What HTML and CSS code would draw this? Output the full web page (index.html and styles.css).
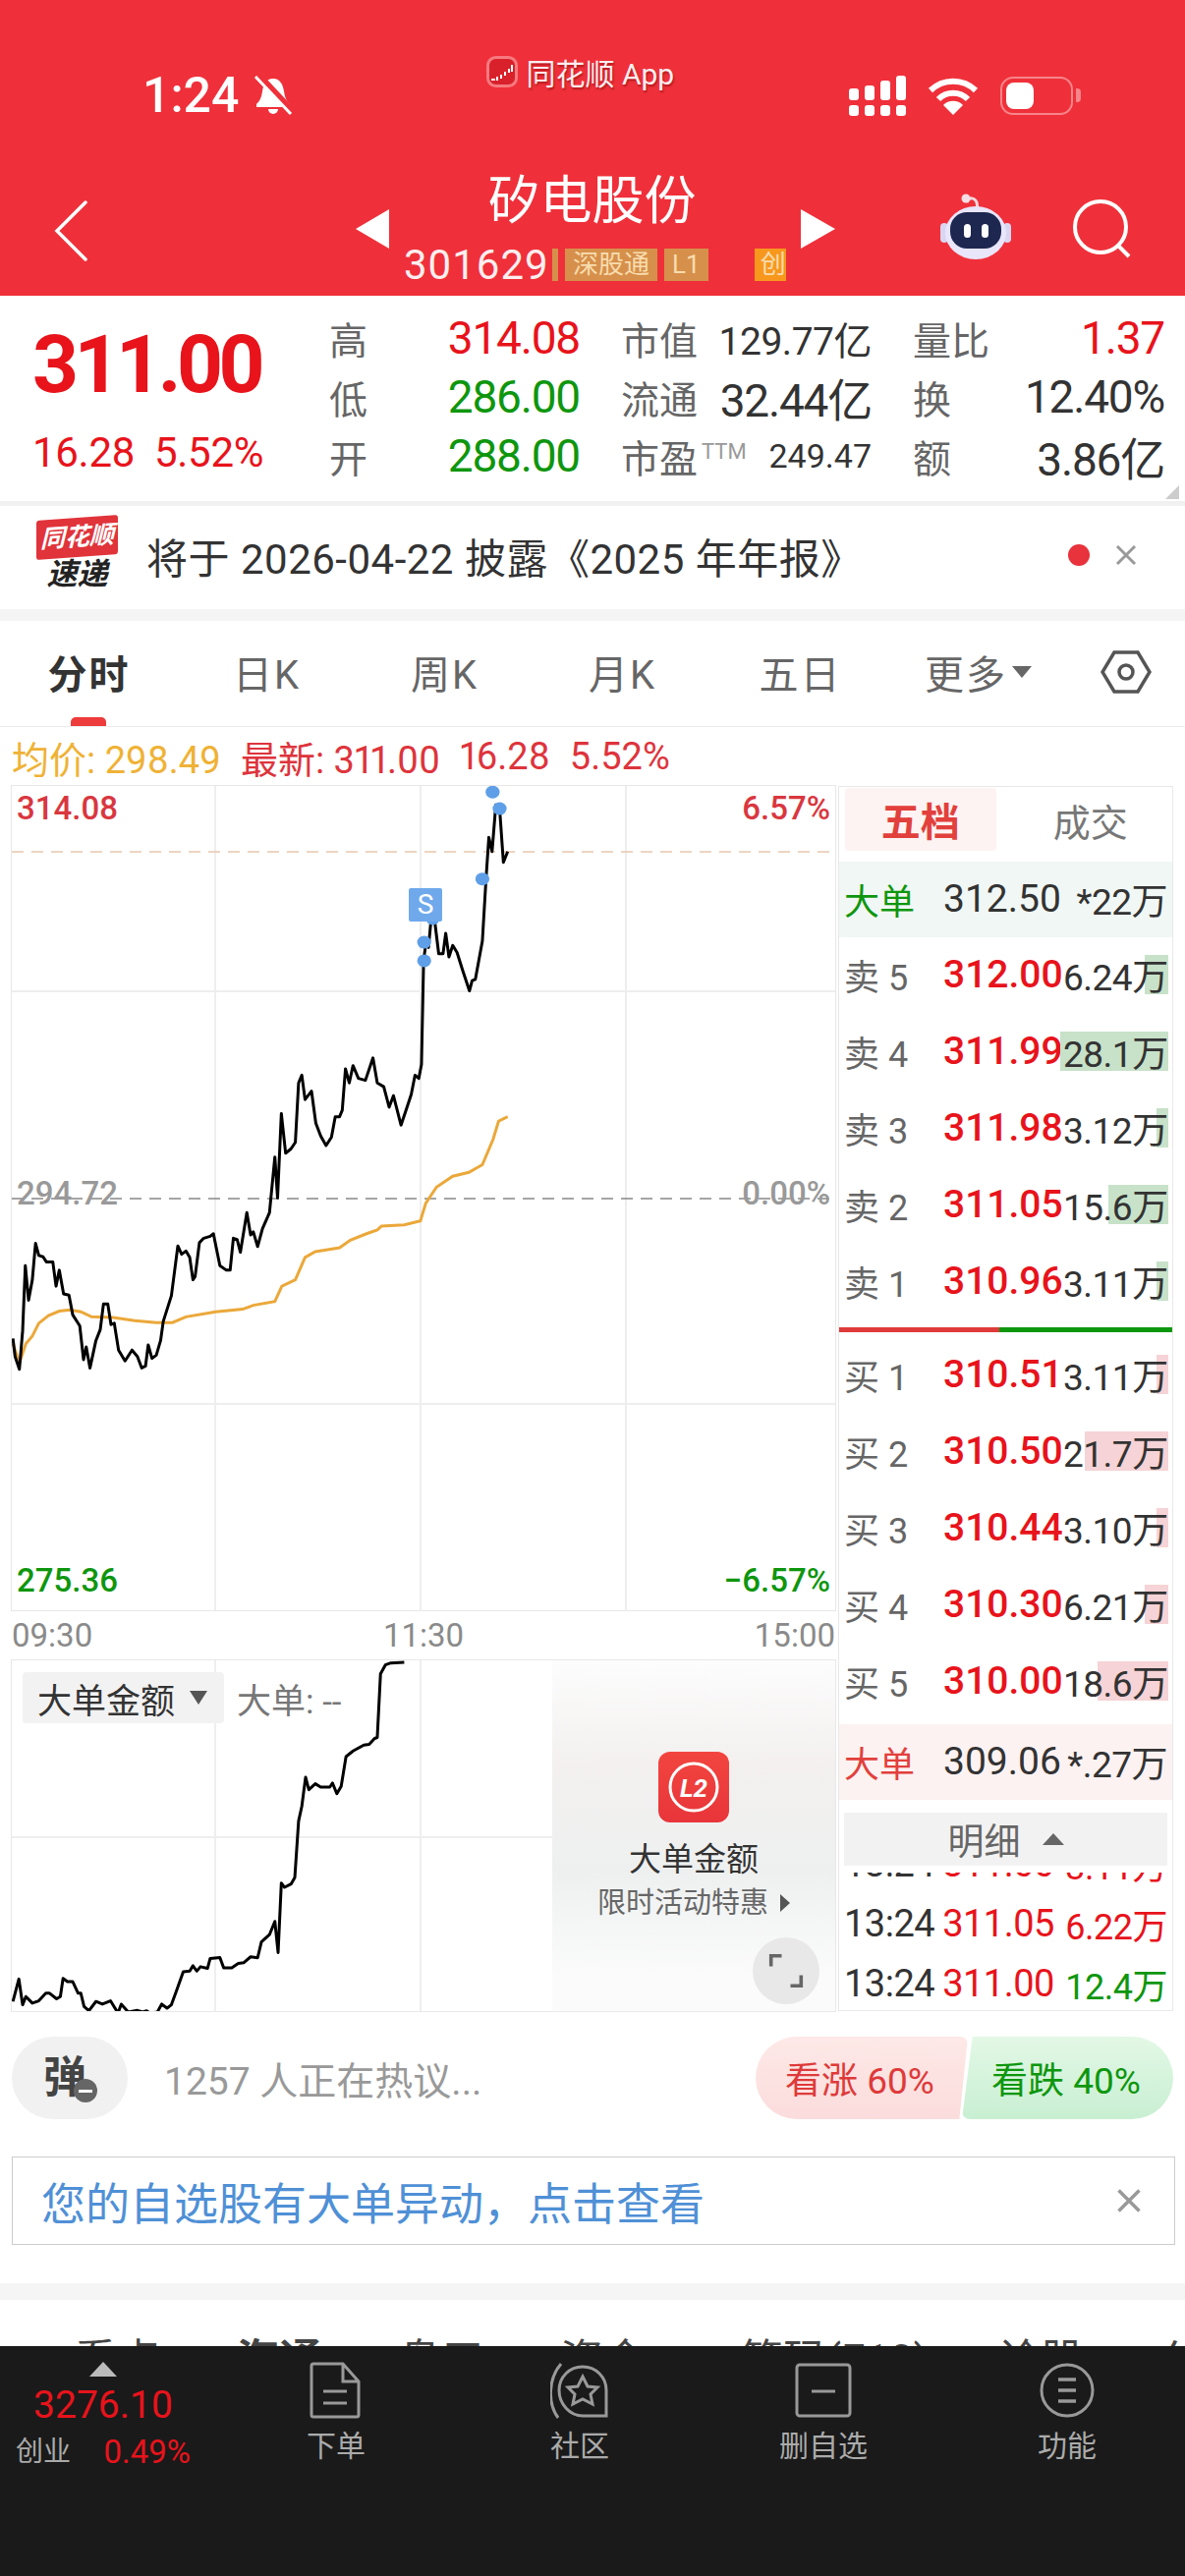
FILE: index.html
```html
<!DOCTYPE html>
<html lang="zh-CN">
<head>
    <meta charset="UTF-8">
    <meta name="viewport" content="width=device-width, initial-scale=1.0">
    <title>矽电股份 301629</title>
    <link rel="stylesheet" href="styles.css">
</head>
<body>

    <header class="topbar">
        <div class="status">
            <div class="clock">
                <span>1:24</span>
                <svg class="bell" viewBox="0 0 40 40">
                    <path fill="#fff" d="M20 3C13 3 10 9 9 16c-1 6-2 9-6 13v3h34v-3c-4-4-5-7-6-13C30 9 27 3 20 3z"/>
                    <path fill="#fff" d="M15 34a5 5 0 0 0 10 0z"/>
                    <path stroke="#ef303a" stroke-width="6" d="M7 1l32 34"/>
                    <path stroke="#fff" stroke-width="3" d="M2 1l36 38"/>
                </svg>
            </div>
            <div class="source">
                <svg class="source-logo" viewBox="0 0 32 32">
                    <rect x="1.5" y="1.5" width="29" height="29" rx="8" fill="#d9212b" stroke="#f67a7f" stroke-width="3"/>
                    <path stroke="#fff" stroke-width="2" d="M5 24h4M11 21v4M15 19v4M19 16v4M23 13v4M26 9v7"/>
                </svg>
                <span>同花顺 App</span>
            </div>
            <div class="sys-icons">
                <svg class="signal" viewBox="0 0 58 41" fill="#fff">
                    <rect x="0" y="13" width="10" height="12" rx="3"/>
                    <rect x="16" y="10" width="10" height="15" rx="3"/>
                    <rect x="32" y="5" width="10" height="20" rx="3"/>
                    <rect x="48" y="0" width="10" height="25" rx="3"/>
                    <rect x="0" y="30" width="10" height="11" rx="3"/>
                    <rect x="16" y="30" width="10" height="11" rx="3"/>
                    <rect x="32" y="30" width="10" height="11" rx="3"/>
                    <rect x="48" y="30" width="10" height="11" rx="3"/>
                </svg>
                <svg class="wifi" viewBox="0 0 52 40" fill="none" stroke="#fff" stroke-width="6">
                    <path d="M3 14a33 33 0 0 1 46 0"/>
                    <path d="M11 23a21 21 0 0 1 30 0"/>
                    <path fill="#fff" stroke="none" d="M26 39L16 29a14 14 0 0 1 20 0z"/>
                </svg>
                <div class="battery"><i></i></div>
            </div>
        </div>
        <div class="nav">
            <svg class="back" viewBox="0 0 34 62" fill="none" stroke="#fff" stroke-width="3.5" stroke-linecap="round">
                <path d="M32 2L3 31l29 29"/>
            </svg>
            <div class="tri tri-left"></div>
            <div class="stock">
                <div class="stock-name">矽电股份</div>
                <div class="stock-sub">
                    <span class="stock-code">301629</span>
                    <span class="tag tag-bar"></span>
                    <span class="tag">深股通</span>
                    <span class="tag">L1</span>
                    <span class="tag tag-cut">创</span>
                </div>
            </div>
            <div class="tri tri-right"></div>
            <svg class="robot" viewBox="0 0 72 68">
                <path d="M27 9c2-6 8-5 10 0l1 6" fill="none" stroke="#f3d8de" stroke-width="3"/>
                <circle cx="26" cy="5" r="4.5" fill="#f6dfe4"/>
                <rect x="0" y="30" width="8" height="20" rx="4" fill="#d9d6f2"/>
                <rect x="64" y="30" width="8" height="20" rx="4" fill="#d9d6f2"/>
                <ellipse cx="36" cy="40" rx="31" ry="27" fill="#e9e5fa"/>
                <rect x="10" y="19" width="52" height="37" rx="17" fill="#1d2750"/>
                <rect x="24" y="31" width="7" height="14" rx="3.5" fill="#fff"/>
                <rect x="42" y="31" width="7" height="14" rx="3.5" fill="#fff"/>
            </svg>
            <svg class="search" viewBox="0 0 60 60" fill="none" stroke="#fff" stroke-width="4">
                <circle cx="29" cy="28" r="26"/>
                <path d="M47 47l11 11"/>
            </svg>
        </div>
    </header>

    <section class="quote">
        <div class="quote-now">
            <div class="price-big">311.00</div>
            <div class="price-change"><span>16.28</span><span>5.52%</span></div>
        </div>
        <div class="quote-grid">
            <div class="cell"><label>高</label><span class="red">314.08</span></div>
            <div class="cell"><label>市值</label><span class="mid">129.77亿</span></div>
            <div class="cell"><label>量比</label><span class="red">1.37</span></div>
            <div class="cell"><label>低</label><span class="green">286.00</span></div>
            <div class="cell"><label>流通</label><span>32.44亿</span></div>
            <div class="cell"><label>换</label><span>12.40%</span></div>
            <div class="cell"><label>开</label><span class="green">288.00</span></div>
            <div class="cell"><label>市盈<sup>TTM</sup></label><span class="small">249.47</span></div>
            <div class="cell"><label>额</label><span>3.86亿</span></div>
        </div>
    </section>

    <div class="notice">
        <div class="notice-logo">
            <div class="notice-logo-top">同花顺</div>
            <div class="notice-logo-bottom">速递</div>
        </div>
        <div class="notice-text">将于 2026-04-22 披露《2025 年年报》</div>
        <div class="notice-dot"></div>
        <svg class="close notice-close" viewBox="0 0 24 24"><path d="M3 3l18 18M21 3L3 21"/></svg>
    </div>

    <nav class="tabs">
        <div class="tab active">分时</div>
        <div class="tab">日K</div>
        <div class="tab">周K</div>
        <div class="tab">月K</div>
        <div class="tab">五日</div>
        <div class="tab">更多<i class="caret"></i></div>
        <div class="tab">
            <svg class="hex" viewBox="0 0 52 46" fill="none" stroke="#555" stroke-width="3.5">
                <path d="M14 3h24l12 20-12 20H14L2 23z"/>
                <circle cx="26" cy="23" r="7"/>
            </svg>
        </div>
    </nav>

    <div class="avg-line">
        <span class="avg-yellow">均价: 298.49</span>
        <span>最新: 311.00</span>
        <span>16.28</span>
        <span>5.52%</span>
    </div>

    <div class="board">
        <div class="charts">
            <div class="chart chart-main">
                <svg class="chart-svg" viewBox="0 0 838 839" width="838" height="839" fill="none">
                    <path class="grid" d="M207 0v839M416 0v839M625 0v839M0 209h838M0 629h838"/>
                    <path stroke="#e7c6ae" stroke-width="1.5" stroke-dasharray="12 8" d="M0 67h838"/>
                    <path stroke="#888" stroke-width="1.5" stroke-dasharray="12 8" d="M0 420h838"/>
                    <svg viewBox="21.9 247.5 1527.7 1289.5" x="0" y="0" width="838" height="839" preserveAspectRatio="none">
                        <polyline class="line-avg" points="24,1120 36,1150 48,1120 60,1108 72,1088 90,1076 110,1069 130,1067 150,1070 170,1078 210,1079 250,1084 290,1087 320,1087 345,1078 400,1070 450,1066 470,1060 510,1054 523,1030 548,1020 566,985 585,976 630,970 650,958 680,948 700,942 708,936 750,934 780,928 790,900 810,875 840,858 870,852 895,840 915,800 925,772 942,765"/>
                        <polyline class="line-price" points="24,1112 28,1140 36,1160 42,1100 47,998 53,1052 60,1020 66,963 72,982 80,984 86,992 98,992 104,1030 110,1005 118,1042 128,1044 135,1075 148,1092 155,1145 160,1125 167,1158 178,1115 186,1098 192,1058 200,1058 206,1090 212,1088 220,1130 232,1147 245,1130 255,1140 263,1158 270,1155 275,1122 282,1143 290,1138 298,1115 303,1085 318,1045 330,967 337,980 345,975 352,985 358,1020 362,1015 370,962 378,955 390,952 396,948 408,998 420,1005 427,1005 433,955 440,957 446,977 458,915 465,950 470,945 478,968 487,940 500,915 510,828 515,892 522,760 530,822 540,815 548,805 554,712 560,700 566,738 578,725 586,775 595,795 605,810 615,797 622,765 630,765 635,755 641,690 648,712 655,685 665,705 678,708 692,673 700,712 712,718 722,750 730,732 744,778 752,758 763,730 770,700 777,705 782,683 786,520 790,495 795,500 800,455 806,455 814,510 822,510 827,478 833,515 840,497 848,508 858,535 871,568 876,552 882,550 895,490 902,390 907,328 913,350 920,277 927,283 934,367 942,350"/>
                        <g fill="#5f9fe8">
                            <ellipse cx="914" cy="257" rx="13" ry="10"/>
                            <ellipse cx="927" cy="283" rx="13" ry="10"/>
                            <ellipse cx="895" cy="393" rx="13" ry="10"/>
                            <ellipse cx="787" cy="492" rx="13" ry="10"/>
                            <ellipse cx="787" cy="521" rx="13" ry="10"/>
                            <ellipse cx="803" cy="455" rx="13" ry="10"/>
                        </g>
                    </svg>
                </svg>
                <span class="mark-s">S</span>
                <span class="axis axis-tl red-soft">314.08</span>
                <span class="axis axis-tr red-soft">6.57%</span>
                <span class="axis axis-ml gray-soft">294.72</span>
                <span class="axis axis-mr gray-soft">0.00%</span>
                <span class="axis axis-bl green">275.36</span>
                <span class="axis axis-br green">−6.57%</span>
            </div>
            <div class="times"><span>09:30</span><span>11:30</span><span>15:00</span></div>
            <div class="chart chart-sub">
                <svg class="chart-svg" viewBox="0 0 838 357" width="838" height="357" fill="none">
                    <path class="grid" d="M207 0v357M416 0v357M0 180h838"/>
                    <svg viewBox="21.9 89 1527.7 1060" x="0" y="0" width="838" height="357" preserveAspectRatio="none">
                        <polyline class="line-price" points="24,1120 35,1052 42,1130 48,1105 60,1125 72,1118 85,1095 92,1095 105,1112 112,1105 117,1050 125,1060 135,1060 145,1095 150,1095 156,1135 165,1148 178,1120 190,1128 205,1118 219,1155 225,1128 238,1152 255,1147 265,1152 272,1148 278,1155 292,1152 300,1128 310,1140 318,1130 328,1085 340,1030 352,1028 358,1012 365,1028 372,1015 385,1020 390,990 408,987 415,1018 430,1018 442,1005 452,1003 465,985 478,988 485,940 500,918 510,878 516,972 522,762 528,775 540,765 547,745 554,575 560,530 567,442 573,480 585,462 595,472 612,472 617,460 625,492 633,470 642,380 655,363 675,345 685,343 695,325 700,322 706,130 715,103 725,97 750,95"/>
                    </svg>
                </svg>
                <div class="sub-head">
                    <div class="sub-select">大单金额<i class="caret caret-dark"></i></div>
                    <div class="sub-value">大单: --</div>
                </div>
                <div class="promo">
                    <div class="promo-icon">
                        <svg viewBox="0 0 72 72">
                            <circle cx="36" cy="36" r="24" fill="none" stroke="#fff" stroke-width="3"/>
                            <text x="36" y="46" text-anchor="middle" class="promo-l2">L2</text>
                        </svg>
                    </div>
                    <div class="promo-title">大单金额</div>
                    <div class="promo-sub">限时活动特惠<i class="promo-arrow"></i></div>
                    <div class="expand">
                        <svg viewBox="0 0 40 40" fill="none" stroke="#666" stroke-width="4">
                            <path d="M3 15V3h12M37 25v12H25"/>
                        </svg>
                    </div>
                </div>
            </div>
        </div>

        <aside class="panel">
            <div class="panel-tabs">
                <div class="panel-tab active">五档</div>
                <div class="panel-tab">成交</div>
            </div>
            <div class="level big big-green"><span class="lv-name">大单</span><span class="lv-price plain">312.50</span><span class="lv-vol"><b>*22万</b></span></div>
            <div class="level"><span class="lv-name">卖 5</span><span class="lv-price">312.00</span><span class="lv-vol"><i class="bar bar-sell" style="width:24px"></i><b>6.24万</b></span></div>
            <div class="level"><span class="lv-name">卖 4</span><span class="lv-price">311.99</span><span class="lv-vol"><i class="bar bar-sell" style="width:110px"></i><b>28.1万</b></span></div>
            <div class="level"><span class="lv-name">卖 3</span><span class="lv-price">311.98</span><span class="lv-vol"><i class="bar bar-sell" style="width:12px"></i><b>3.12万</b></span></div>
            <div class="level"><span class="lv-name">卖 2</span><span class="lv-price">311.05</span><span class="lv-vol"><i class="bar bar-sell" style="width:61px"></i><b>15.6万</b></span></div>
            <div class="level"><span class="lv-name">卖 1</span><span class="lv-price">310.96</span><span class="lv-vol"><i class="bar bar-sell" style="width:12px"></i><b>3.11万</b></span></div>
            <div class="ratio"><i class="ratio-red"></i><i class="ratio-green"></i></div>
            <div class="level"><span class="lv-name">买 1</span><span class="lv-price">310.51</span><span class="lv-vol"><i class="bar bar-buy" style="width:12px"></i><b>3.11万</b></span></div>
            <div class="level"><span class="lv-name">买 2</span><span class="lv-price">310.50</span><span class="lv-vol"><i class="bar bar-buy" style="width:85px"></i><b>21.7万</b></span></div>
            <div class="level"><span class="lv-name">买 3</span><span class="lv-price">310.44</span><span class="lv-vol"><i class="bar bar-buy" style="width:12px"></i><b>3.10万</b></span></div>
            <div class="level"><span class="lv-name">买 4</span><span class="lv-price">310.30</span><span class="lv-vol"><i class="bar bar-buy" style="width:24px"></i><b>6.21万</b></span></div>
            <div class="level"><span class="lv-name">买 5</span><span class="lv-price">310.00</span><span class="lv-vol"><i class="bar bar-buy" style="width:72px"></i><b>18.6万</b></span></div>
            <div class="level big big-red"><span class="lv-name">大单</span><span class="lv-price plain">309.06</span><span class="lv-vol"><b>*.27万</b></span></div>
            <div class="detail-btn">明细<i class="caret-up"></i></div>
            <div class="trades">
                <div class="trade"><span>13:24</span><span class="trade-price">311.00</span><span class="trade-vol red">3.11万</span></div>
                <div class="trade"><span>13:24</span><span class="trade-price">311.05</span><span class="trade-vol red">6.22万</span></div>
                <div class="trade"><span>13:24</span><span class="trade-price">311.00</span><span class="trade-vol green">12.4万</span></div>
            </div>
        </aside>
    </div>

    <div class="actions">
        <div class="danmu">弹<i class="danmu-badge"></i></div>
        <div class="talk">1257 人正在热议...</div>
        <div class="vote vote-up">看涨 60%</div>
        <div class="vote vote-down">看跌 40%</div>
    </div>

    <div class="alert">
        <span>您的自选股有大单异动，点击查看</span>
        <svg class="close" viewBox="0 0 24 24"><path d="M3 3l18 18M21 3L3 21"/></svg>
    </div>

    <div class="band"></div>

    <div class="more-tabs">
        <span>看点</span><span class="strong">海通</span><span>盘口</span><span>资金</span><span class="wide">筹码(F10)</span><span>诊股</span><span>公告</span>
    </div>

    <footer class="footer">
        <div class="index">
            <i class="index-up"></i>
            <div class="index-value">3276.10</div>
            <div class="index-row"><span>创业</span><b>0.49%</b></div>
        </div>
        <div class="foot-item">
            <svg viewBox="0 0 60 58" fill="none" stroke="#999" stroke-width="3">
                <path d="M7 2h30l16 18v34a2 2 0 0 1-2 2H7a2 2 0 0 1-2-2V4a2 2 0 0 1 2-2zM37 2v18h16"/>
                <path d="M17 30h24M17 42h24"/>
            </svg>
            <span>下单</span>
        </div>
        <div class="foot-item">
            <svg viewBox="0 0 60 58" fill="none" stroke="#999" stroke-width="3">
                <path d="M8 57C-3 42-2 17 11 2"/>
                <path d="M33 5c13 0 24 10 24 24v26H33C20 55 9 43 9 29S20 5 33 5z"/>
                <path d="M33 15l5 10 10 1-7 7 2 10-10-5-10 5 2-10-7-7 10-1z"/>
            </svg>
            <span>社区</span>
        </div>
        <div class="foot-item">
            <svg viewBox="0 0 60 58" fill="none" stroke="#999" stroke-width="3">
                <rect x="3" y="3" width="54" height="52" rx="3"/>
                <path d="M18 30h24"/>
            </svg>
            <span>删自选</span>
        </div>
        <div class="foot-item">
            <svg viewBox="0 0 60 58" fill="none" stroke="#999" stroke-width="3">
                <circle cx="30" cy="29" r="26"/>
                <path stroke-width="3.5" d="M21 18h18M21 29h18M21 40h18"/>
            </svg>
            <span>功能</span>
        </div>
    </footer>

</body>
</html>
```

FILE: styles.css
```css
* {
    box-sizing: border-box;
}

body {
    margin: 0;
    width: 1206px;
    height: 2622px;
    overflow: hidden;
    display: flex;
    flex-direction: column;
    background-color: #fff;
    color: #333;
    font-family: Roboto, "Noto Sans CJK SC", sans-serif;
}

.red { color: #e8131b; }
.green { color: #0e960e; }
.red-soft { color: #d9373f; }
.gray-soft { color: #999; }

/* top red bar */
.topbar {
    height: 301px;
    flex: none;
    background-color: #ef303a;
    color: #fff;
}

.status {
    height: 170px;
    display: flex;
    padding-left: 145px;
}

.clock {
    display: flex;
    align-items: center;
    height: 60px;
    margin-top: 67px;
    font-size: 50px;
    font-weight: 500;
    gap: 15px;
}

.bell {
    width: 40px;
    height: 40px;
}

.source {
    display: flex;
    align-items: center;
    gap: 8px;
    height: 34px;
    margin: 56px 0 0 197px;
    font-size: 30px;
    color: #fbeef0;
    text-shadow: 1px 2px 2px rgba(120, 0, 0, 0.5);
}

.source-logo {
    width: 32px;
    height: 32px;
}

.sys-icons {
    display: flex;
    align-items: center;
    margin: 77px 0 0 auto;
    padding-right: 114px;
    height: 41px;
}

.signal {
    width: 58px;
    height: 41px;
}

.wifi {
    width: 52px;
    height: 40px;
    margin-left: 22px;
}

.battery {
    position: relative;
    width: 74px;
    height: 39px;
    margin-left: 22px;
    padding: 4px;
    border: 2px solid #f7858a;
    border-radius: 13px;
}

.battery::after {
    content: "";
    position: absolute;
    right: -10px;
    top: 10px;
    width: 5px;
    height: 14px;
    background-color: #f7858a;
    border-radius: 0 4px 4px 0;
}

.battery i {
    display: block;
    width: 28px;
    height: 27px;
    background-color: #fff;
    border-radius: 8px;
}

.nav {
    display: flex;
    align-items: flex-start;
    padding-left: 55px;
}

.back {
    width: 34px;
    height: 62px;
    margin: 34px 273px 0 0;
}

.tri {
    width: 0;
    height: 0;
    margin-top: 43px;
    border-top: 20px solid transparent;
    border-bottom: 20px solid transparent;
}

.tri-left {
    border-right: 34px solid #fff;
}

.tri-right {
    border-left: 35px solid #fff;
}

.stock {
    width: 419px;
}

.stock-name {
    height: 64px;
    line-height: 64px;
    padding-right: 6px;
    margin-top: 3px;
    font-size: 53px;
    text-align: center;
}

.stock-sub {
    display: flex;
    align-items: center;
    height: 33px;
    margin-top: 16px;
    padding-left: 15px;
}

.stock-code {
    width: 151px;
    font-size: 42px;
    letter-spacing: 1px;
    opacity: 0.92;
}

.tag {
    height: 33px;
    line-height: 33px;
    padding: 0 8px;
    margin-right: 7px;
    font-size: 26px;
    color: #f8dcae;
    background-color: #d6904b;
}

.tag-bar {
    width: 6px;
    padding: 0;
}

.tag-cut {
    width: 32px;
    padding: 0 6px;
    margin-left: 40px;
    margin-right: 0;
    overflow: hidden;
    white-space: nowrap;
    background-color: #f7981d;
}

.robot {
    width: 72px;
    height: 68px;
    margin: 27px 0 0 107px;
}

.search {
    width: 60px;
    height: 60px;
    margin: 33px 0 0 62px;
}

/* quote block */
.quote {
    position: relative;
    display: flex;
    flex: none;
    height: 214px;
    padding: 13px 0 0 33px;
    border-bottom: 5px solid #f1f1f1;
}

.quote::after {
    content: "";
    position: absolute;
    right: 6px;
    bottom: 2px;
    border-left: 14px solid transparent;
    border-bottom: 14px solid #ccc;
}

.quote-now {
    width: 302px;
    padding-top: 12px;
}

.price-big {
    height: 90px;
    line-height: 90px;
    font-size: 82px;
    font-weight: 700;
    letter-spacing: -4.5px;
    color: #e8131b;
}

.price-change {
    display: flex;
    gap: 20px;
    height: 50px;
    line-height: 50px;
    margin-top: 20px;
    font-size: 42px;
    letter-spacing: -0.3px;
    color: #e8131b;
}

.quote-grid {
    display: grid;
    grid-template-columns: 255px 255px 256px;
    grid-auto-rows: 60px;
    column-gap: 42px;
}

.cell {
    display: flex;
    align-items: center;
    justify-content: space-between;
    font-size: 46px;
    letter-spacing: -1.2px;
}

.cell label {
    font-size: 39px;
    letter-spacing: 0;
    color: #666;
    white-space: nowrap;
}

.cell sup {
    font-size: 22px;
    color: #999;
    margin-left: 4px;
    vertical-align: 14px;
    line-height: 0;
}

.cell .mid {
    font-size: 39px;
    letter-spacing: -0.5px;
}

.cell .small {
    font-size: 34px;
    letter-spacing: 0;
}

/* report notice */
.notice {
    display: flex;
    align-items: center;
    flex: none;
    height: 105px;
    padding: 0 0 5px 37px;
}

.notice-logo {
    width: 83px;
    margin-right: 29px;
    text-align: center;
    font-style: italic;
    font-weight: 700;
}

.notice-logo-top {
    height: 40px;
    line-height: 40px;
    font-size: 25px;
    color: #fff;
    background-color: #e0333a;
    border-radius: 3px;
    transform: skewY(-4deg);
}

.notice-logo-bottom {
    height: 36px;
    line-height: 36px;
    font-size: 31px;
    color: #222;
}

.notice-text {
    font-size: 42px;
    letter-spacing: 0.5px;
    color: #333;
    white-space: nowrap;
}

.notice-dot {
    width: 22px;
    height: 22px;
    margin-left: auto;
    border-radius: 50%;
    background-color: #e8323c;
}

.close {
    width: 24px;
    height: 24px;
    fill: none;
    stroke: #999;
    stroke-width: 3;
}

.notice-close {
    margin: 0 48px 0 25px;
}

/* period tabs */
.tabs {
    display: grid;
    grid-template-columns: repeat(6, 181px) 1fr;
    flex: none;
    height: 120px;
    border-top: 12px solid #f5f5f5;
    border-bottom: 1px solid #ececec;
}

.tab {
    position: relative;
    display: flex;
    align-items: center;
    justify-content: center;
    padding-bottom: 4px;
    font-size: 40px;
    letter-spacing: 2px;
    color: #666;
}

.tab.active {
    font-weight: 700;
    color: #333;
}

.tab.active::after {
    content: "";
    position: absolute;
    left: 72px;
    bottom: 0;
    width: 36px;
    height: 9px;
    border-radius: 5px 5px 0 0;
    background-color: #ee3b3b;
}

.caret {
    width: 0;
    height: 0;
    margin-left: 5px;
    border-left: 10px solid transparent;
    border-right: 10px solid transparent;
    border-top: 12px solid #666;
}

.hex {
    width: 52px;
    height: 46px;
}

/* price summary */
.avg-line {
    display: flex;
    align-items: center;
    gap: 20px;
    flex: none;
    height: 60px;
    padding-left: 12px;
    font-size: 38px;
    font-variant-numeric: proportional-nums;
    color: #de343c;
}

.avg-yellow {
    color: #efb236;
}

/* chart area */
.board {
    display: flex;
    flex: none;
    height: 1247px;
    padding-left: 12px;
}

.charts {
    width: 838px;
}

.chart {
    position: relative;
    width: 838px;
    outline: 1px solid #e8e8e8;
}

.chart-main {
    height: 839px;
}

.chart-sub {
    height: 357px;
    overflow: hidden;
}

.chart-svg {
    display: block;
}

.grid {
    stroke: #eeeeee;
    stroke-width: 2;
}

.line-price {
    fill: none;
    stroke: #000;
    stroke-width: 3;
    stroke-linejoin: round;
    vector-effect: non-scaling-stroke;
}

.line-avg {
    fill: none;
    stroke: #eba83a;
    stroke-width: 3;
    vector-effect: non-scaling-stroke;
}

.mark-s {
    position: absolute;
    left: 404px;
    top: 104px;
    width: 34px;
    height: 34px;
    line-height: 34px;
    border-radius: 2px;
    text-align: center;
    font-size: 28px;
    color: #fff;
    background-color: #6fa9ec;
}

.axis {
    position: absolute;
    font-size: 33px;
    font-weight: 500;
    line-height: 40px;
}

.axis-tl { left: 5px; top: 3px; }
.axis-tr { right: 5px; top: 3px; }
.axis-ml { left: 5px; top: 395px; }
.axis-mr { right: 5px; top: 395px; }
.axis-bl { left: 5px; bottom: 10px; }
.axis-br { right: 5px; bottom: 10px; }

.times {
    display: flex;
    justify-content: space-between;
    align-items: center;
    height: 51px;
    font-size: 33px;
    color: #8a8a8a;
}

.sub-head {
    position: absolute;
    left: 11px;
    top: 12px;
    display: flex;
    align-items: center;
    gap: 13px;
}

.sub-select {
    display: flex;
    align-items: center;
    height: 52px;
    width: 205px;
    padding-left: 15px;
    border-radius: 4px;
    font-size: 35px;
    background-color: #f2f2f2;
}

.caret-dark {
    margin-left: 15px;
    border-left-width: 9px;
    border-right-width: 9px;
    border-top: 14px solid #555;
}

.sub-value {
    font-size: 35px;
    color: #777;
}

.promo {
    position: absolute;
    right: 0;
    top: 0;
    display: flex;
    flex-direction: column;
    align-items: center;
    width: 288px;
    height: 357px;
    padding-top: 93px;
    background: linear-gradient(to bottom, #fdfdfd, #f3f0ef 30%, #eef0f0 60%, #fbfbfb 90%);
}

.promo-icon {
    width: 72px;
    height: 72px;
    border-radius: 12px;
    background: linear-gradient(to bottom, #f2453f, #e8353a);
}

.promo-icon svg {
    display: block;
}

.promo-l2 {
    font-size: 26px;
    font-weight: 700;
    font-style: italic;
    fill: #fff;
}

.promo-title {
    margin-top: 18px;
    line-height: 40px;
    font-size: 33px;
    color: #333;
}

.promo-sub {
    display: flex;
    align-items: center;
    margin-top: 4px;
    line-height: 40px;
    font-size: 29px;
    color: #666;
}

.promo-arrow {
    margin-left: 12px;
    border-top: 9px solid transparent;
    border-bottom: 9px solid transparent;
    border-left: 10px solid #555;
}

.expand {
    position: absolute;
    right: 16px;
    bottom: 7px;
    display: flex;
    align-items: center;
    justify-content: center;
    width: 68px;
    height: 68px;
    border-radius: 50%;
    background-color: #e8e8e8;
}

.expand svg {
    width: 36px;
    height: 36px;
}

/* order book */
.panel {
    width: 341px;
    height: 1247px;
    margin-left: 3px;
    padding-top: 1px;
    overflow: hidden;
    border: 1px solid #e8e8e8;
}

.panel-tabs {
    display: flex;
    height: 64px;
    margin: 0 0 11px 6px;
}

.panel-tab {
    display: flex;
    align-items: center;
    justify-content: center;
    width: 154px;
    font-size: 40px;
    color: #777;
}

.panel-tab + .panel-tab {
    width: 180px;
    padding-left: 13px;
    font-size: 38px;
}

.panel-tab.active {
    font-weight: 700;
    color: #e2403c;
    background-color: #fdf3f2;
    border-radius: 4px;
}

.level {
    display: grid;
    grid-template-columns: 101px 122px 1fr;
    align-items: center;
    height: 78px;
    padding: 0 5px 2px;
}

.level.big {
    height: 77px;
}

.big-green {
    background-color: #f1f7f4;
}

.big-red {
    margin-top: 4px;
    background-color: #fdf2f2;
}

.lv-name {
    font-size: 36px;
    color: #666;
    white-space: nowrap;
}

.big-green .lv-name {
    color: #0e960e;
}

.big-red .lv-name {
    color: #e2403c;
}

.lv-price {
    font-size: 39px;
    font-weight: 500;
    color: #e8131b;
}

.lv-price.plain {
    font-weight: 400;
    color: #333;
}

.lv-vol {
    position: relative;
    display: flex;
    align-items: center;
    justify-content: flex-end;
    height: 40px;
    font-size: 37px;
    letter-spacing: -0.5px;
    white-space: nowrap;
}

.lv-vol b {
    position: relative;
    font-weight: 400;
}

.bar {
    position: absolute;
    right: 0;
    top: 0;
    height: 40px;
}

.bar-sell {
    background-color: #c7e2c9;
}

.bar-buy {
    background-color: #f6d3d6;
}

.ratio {
    display: flex;
    height: 5px;
    margin: 7px 0 5px;
}

.ratio-red {
    width: 163px;
    background-color: #de3a3a;
}

.ratio-green {
    flex: 1;
    background-color: #0e960e;
}

.detail-btn {
    display: flex;
    align-items: center;
    justify-content: center;
    gap: 22px;
    height: 54px;
    margin: 13px 5px 0;
    font-size: 37px;
    color: #666;
    background-color: #f2f2f2;
}

.caret-up {
    border-left: 11px solid transparent;
    border-right: 11px solid transparent;
    border-bottom: 12px solid #666;
}

.trades {
    display: flex;
    flex-direction: column;
    justify-content: flex-end;
    gap: 13px;
    height: 142px;
    margin-top: 7px;
    padding: 0 5px 5px;
    overflow: hidden;
}

.trade {
    display: flex;
    flex: none;
    align-items: center;
    height: 48px;
    font-size: 38px;
    letter-spacing: -0.5px;
}

.trade-price {
    margin-left: 8px;
    color: #e8131b;
}

.trade-vol {
    margin-left: auto;
    font-size: 36px;
}

/* comment and vote row */
.actions {
    display: flex;
    align-items: center;
    flex: none;
    height: 84px;
    margin-top: 26px;
    padding: 0 12px;
}

.danmu {
    position: relative;
    width: 118px;
    height: 84px;
    line-height: 84px;
    padding-left: 32px;
    border-radius: 42px;
    font-size: 44px;
    font-weight: 700;
    color: #444;
    background-color: #f1f1f1;
}

.danmu-badge {
    position: absolute;
    left: 63px;
    top: 43px;
    width: 24px;
    height: 24px;
    border-radius: 50%;
    background-color: #666;
}

.danmu-badge::after {
    content: "";
    position: absolute;
    left: 5px;
    top: 11px;
    width: 14px;
    height: 3px;
    background-color: #fff;
}

.talk {
    margin-left: 37px;
    font-size: 39px;
    color: #999;
}

.vote {
    display: flex;
    align-items: center;
    height: 84px;
    font-size: 37px;
}

.vote-up {
    margin-left: auto;
    width: 216px;
    padding-left: 30px;
    border-radius: 42px 8px 8px 42px;
    color: #de3a3a;
    background: linear-gradient(to bottom, #fde9e7, #fbdcdc);
    clip-path: polygon(0 0, 100% 0, 96% 100%, 0 100%);
}

.vote-down {
    width: 215px;
    margin-left: -6px;
    padding-left: 30px;
    border-radius: 8px 42px 42px 8px;
    color: #0e960e;
    background: linear-gradient(to bottom, #e3f8e6, #c8efd2);
    clip-path: polygon(5% 0, 100% 0, 100% 100%, 0 100%);
}

.alert {
    display: flex;
    align-items: center;
    justify-content: space-between;
    flex: none;
    height: 90px;
    margin: 38px 10px 0 12px;
    padding: 0 32px 0 29px;
    border: 1px solid #ccc;
    font-size: 45px;
    color: #4f90d6;
}

.alert .close {
    width: 28px;
    height: 28px;
}

.band {
    flex: none;
    height: 17px;
    margin-top: 39px;
    background-color: #f5f5f5;
}

.more-tabs {
    display: flex;
    flex: 1;
    gap: 77px;
    min-height: 0;
    padding: 32px 0 0 75px;
    overflow: hidden;
    font-size: 44px;
    line-height: 60px;
    color: #444;
    white-space: nowrap;
}

.more-tabs .strong {
    font-weight: 700;
}

.more-tabs .wide {
    margin: 0 -7px 0 18px;
}

/* bottom bar */
.footer {
    display: grid;
    grid-template-columns: 218px repeat(4, 248px);
    flex: none;
    height: 234px;
    padding-top: 16px;
    background-color: #1a1a1a;
    color: #aaa;
}

.index {
    display: flex;
    flex-direction: column;
    align-items: center;
    padding: 0 24px 0 16px;
}

.index-up {
    border-left: 14px solid transparent;
    border-right: 14px solid transparent;
    border-bottom: 15px solid #bbb;
}

.index-value {
    margin-top: 4px;
    line-height: 50px;
    font-size: 39px;
    color: #e8131b;
}

.index-row {
    display: flex;
    align-items: center;
    justify-content: space-between;
    width: 100%;
    line-height: 46px;
    font-size: 28px;
}

.index-row b {
    font-size: 33px;
    font-weight: 400;
    color: #e8131b;
}

.foot-item {
    display: flex;
    flex-direction: column;
    align-items: center;
}

.foot-item svg {
    width: 60px;
    height: 58px;
}

.foot-item span {
    margin-top: 7px;
    line-height: 42px;
    font-size: 30px;
}
```
